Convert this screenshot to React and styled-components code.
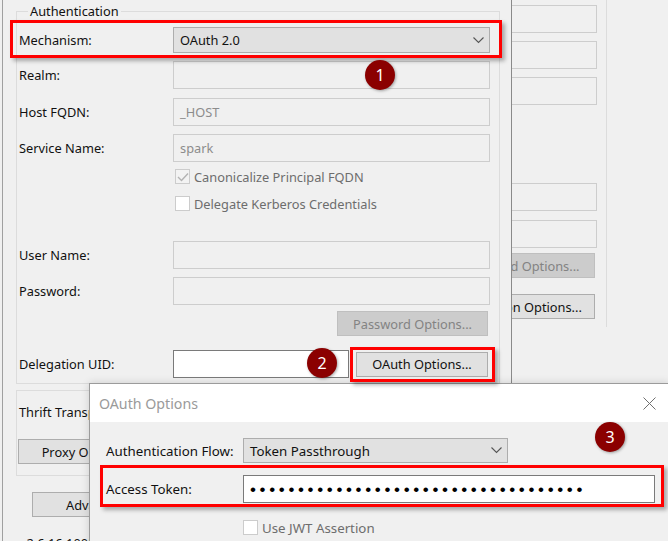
import React from 'react'
import styled, { createGlobalStyle } from 'styled-components'

const GlobalStyle = createGlobalStyle`
  html, body {
    margin: 0;
    padding: 0;
    background: #f0f0f0;
  }
  * {
    box-sizing: border-box;
  }
`

const Screen = styled.div`
  position: relative;
  display: flex;
  width: 668px;
  height: 541px;
  overflow: hidden;
  background: #f0f0f0;
  font-family: "Segoe UI", "Noto Sans", sans-serif;
  font-size: 12.8px;
  color: #111;
`

const MainWindow = styled.div`
  flex-shrink: 0;
  width: 510px;
  height: 100%;
  margin-left: 2px;
  padding-left: 13px;
  border-left: 1px solid #a0a0a0;
  border-right: 1px solid #8a8a8a;
`

const Group = styled.div`
  width: 484px;
  margin-top: ${p => p.$top}px;
  padding: 0 8px ${p => p.$bottom}px 2px;
  border: 1px solid #dcdcdc;
`

const Legend = styled.div`
  width: fit-content;
  margin: -9px 0 0 9px;
  padding: 0 2px;
  line-height: 16px;
  background: #f0f0f0;
`

const Row = styled.div`
  display: flex;
  align-items: center;
  height: ${p => p.$h || 28}px;
  margin-top: ${p => p.$gap}px;
`

const Label = styled.span`
  flex-shrink: 0;
  width: ${p => p.$w || 154}px;
  white-space: nowrap;
`

const TextBox = styled.div`
  display: flex;
  align-items: center;
  width: ${p => p.$w || 317}px;
  height: 100%;
  padding-left: 6px;
  border: 1px solid ${p => (p.$active ? '#7a7a7a' : '#cdcdcd')};
  background: ${p => (p.$active ? '#fff' : '#f0f0f0')};
  color: #8c8c8c;
`

const Combo = styled.div`
  display: flex;
  align-items: center;
  justify-content: space-between;
  width: ${p => p.$w}px;
  height: 100%;
  padding: 0 5px 0 6px;
  border: 1px solid #adadad;
  background: #e1e1e1;
  color: #111;
`

const Button = styled.div`
  display: flex;
  align-items: center;
  justify-content: center;
  flex-shrink: 0;
  width: ${p => p.$w}px;
  height: 25px;
  margin-left: ${p => p.$ml || 0}px;
  border: 1px solid ${p => (p.$disabled ? '#bfbfbf' : '#adadad')};
  background: ${p => (p.$disabled ? '#cccccc' : '#e1e1e1')};
  color: ${p => (p.$disabled ? '#838383' : '#111')};
  white-space: nowrap;
`

const CheckRow = styled.div`
  display: flex;
  align-items: center;
  height: 15px;
  margin-top: ${p => p.$gap}px;
  padding-left: ${p => p.$indent}px;
  color: #6d6d6d;
  white-space: nowrap;
`

const Box = styled.span`
  display: flex;
  align-items: center;
  justify-content: center;
  flex-shrink: 0;
  width: 15px;
  height: 15px;
  margin-right: 4px;
  border: 1px solid #cccccc;
  background: ${p => (p.$checked ? '#f3f3f3' : '#fff')};
`

const BottomText = styled.div`
  margin: 17px 0 0 4px;
  white-space: nowrap;
`

const BackWindow = styled.div`
  flex: 1;
  overflow: hidden;
`

const BackGroup = styled.div`
  display: flex;
  flex-direction: column;
  width: 95px;
  height: 327px;
  border-right: 1px solid #dcdcdc;
`

const BackField = styled.div`
  flex-shrink: 0;
  width: 85px;
  height: 28px;
  margin-top: ${p => p.$gap}px;
  border: 1px solid #cdcdcd;
  border-left: none;
  background: #f0f0f0;
`

const BackRow = styled.div`
  display: flex;
  margin-top: ${p => p.$gap}px;
`

const Dialog = styled.div`
  position: absolute;
  left: 89px;
  top: 383px;
  width: 580px;
  height: 170px;
  border: 1px solid #9b9b9b;
  background: #f0f0f0;
  font-size: 13.3px;
  box-shadow: 0 0 8px rgba(0, 0, 0, 0.15);
`

const TitleBar = styled.div`
  display: flex;
  align-items: center;
  justify-content: space-between;
  height: 38px;
  padding-left: 9px;
  background: #fff;
  color: #9a9a9a;
  font-size: 14.2px;
`

const CloseBox = styled.div`
  display: flex;
  align-items: center;
  justify-content: center;
  width: 38px;
  height: 100%;
`

const DialogBody = styled.div`
  padding-left: 16px;
`

const Dots = styled.span`
  color: #000;
  font-family: "Liberation Sans", sans-serif;
  font-size: 17px;
  letter-spacing: 3.65px;
  line-height: 1;
`

const Highlight = styled.div`
  position: absolute;
  left: ${p => p.$x}px;
  top: ${p => p.$y}px;
  width: ${p => p.$w}px;
  height: ${p => p.$h}px;
  border: 3px solid #ff0000;
  box-shadow: 3px 3px 4px rgba(0, 0, 0, 0.3);
`

const Badge = styled.div`
  position: absolute;
  left: ${p => p.$x - 15}px;
  top: ${p => p.$y - 15}px;
  display: flex;
  align-items: center;
  justify-content: center;
  width: 30px;
  height: 30px;
  border-radius: 50%;
  background: #8b0000;
  color: #fff;
  font-family: "Noto Sans", sans-serif;
  font-size: 16px;
  box-shadow: 1px 1px 3px rgba(0, 0, 0, 0.35);
`

const Chevron = () => (
  <svg width="11" height="7" viewBox="0 0 11 7">
    <path d="M0.5 0.5 L5.5 5.5 L10.5 0.5" fill="none" stroke="#555" strokeWidth="1.1" />
  </svg>
)

const CheckMark = () => (
  <svg width="12" height="10" viewBox="0 0 12 10">
    <path d="M1 5 L4.5 8.5 L11 1.5" fill="none" stroke="#b3b3b3" strokeWidth="1.4" />
  </svg>
)

const CloseIcon = () => (
  <svg width="13" height="13" viewBox="0 0 13 13">
    <path d="M0.5 0.5 L12.5 12.5 M12.5 0.5 L0.5 12.5" stroke="#6f6f6f" strokeWidth="1" />
  </svg>
)

const App = () => {
  const dots = '\u2022'.repeat(35)

  return (
    <Screen>
      <GlobalStyle />
      <MainWindow>
        <Group $top={11} $bottom={5}>
          <Legend>Authentication</Legend>
          <Row $gap={8} $h={26}>
            <Label>Mechanism:</Label>
            <Combo $w={317}>
              <span>OAuth 2.0</span>
              <Chevron />
            </Combo>
          </Row>
          <Row $gap={8}>
            <Label>Realm:</Label>
            <TextBox />
          </Row>
          <Row $gap={9}>
            <Label>Host FQDN:</Label>
            <TextBox>_HOST</TextBox>
          </Row>
          <Row $gap={8}>
            <Label>Service Name:</Label>
            <TextBox>spark</TextBox>
          </Row>
          <CheckRow $gap={7} $indent={156}>
            <Box $checked><CheckMark /></Box>
            Canonicalize Principal FQDN
          </CheckRow>
          <CheckRow $gap={12} $indent={156}>
            <Box />
            Delegate Kerberos Credentials
          </CheckRow>
          <Row $gap={30}>
            <Label>User Name:</Label>
            <TextBox />
          </Row>
          <Row $gap={8}>
            <Label>Password:</Label>
            <TextBox />
          </Row>
          <Row $gap={6} $h={25}>
            <Button $disabled $w={151} $ml={318}>Password Options...</Button>
          </Row>
          <Row $gap={14}>
            <Label>Delegation UID:</Label>
            <TextBox $active $w={176} />
            <Button $w={132} $ml={7}>OAuth Options...</Button>
          </Row>
        </Group>
        <Group $top={6} $bottom={11}>
          <Row $gap={11} $h={20}>
            <Label>Thrift Transport:</Label>
          </Row>
          <Row $gap={17} $h={25}>
            <Button $w={142} $ml={-1}>Proxy Options...</Button>
          </Row>
        </Group>
        <Row $gap={16} $h={25}>
          <Button $w={188} $ml={16}>Advanced Options...</Button>
        </Row>
        <BottomText>v2.6.16.1005 (64 bit)</BottomText>
      </MainWindow>

      <BackWindow>
        <BackGroup>
          <BackField $gap={5} />
          <BackField $gap={8} />
          <BackField $gap={8} />
          <BackField $gap={78} />
          <BackField $gap={9} />
          <BackRow $gap={5}>
            <Button $disabled $w={150} $ml={-67}>Password Options...</Button>
          </BackRow>
          <BackRow $gap={16}>
            <Button $w={156} $ml={-73}>Connection Options...</Button>
          </BackRow>
        </BackGroup>
      </BackWindow>

      <Dialog>
        <TitleBar>
          <span>OAuth Options</span>
          <CloseBox><CloseIcon /></CloseBox>
        </TitleBar>
        <DialogBody>
          <Row $gap={16} $h={25}>
            <Label $w={137}>Authentication Flow:</Label>
            <Combo $w={265}>
              <span>Token Passthrough</span>
              <Chevron />
            </Combo>
          </Row>
          <Row $gap={12}>
            <Label $w={137}>Access Token:</Label>
            <TextBox $active $w={412}>
              <Dots>{dots}</Dots>
            </TextBox>
          </Row>
          <CheckRow $gap={17} $indent={137}>
            <Box />
            Use JWT Assertion
          </CheckRow>
        </DialogBody>
      </Dialog>

      <Highlight $x={10} $y={20} $w={492} $h={38} />
      <Highlight $x={350} $y={347} $w={145} $h={35} />
      <Highlight $x={100} $y={465} $w={564} $h={42} />
      <Badge $x={380} $y={75}>1</Badge>
      <Badge $x={322} $y={363}>2</Badge>
      <Badge $x={610} $y={437}>3</Badge>
    </Screen>
  )
}

export default App
